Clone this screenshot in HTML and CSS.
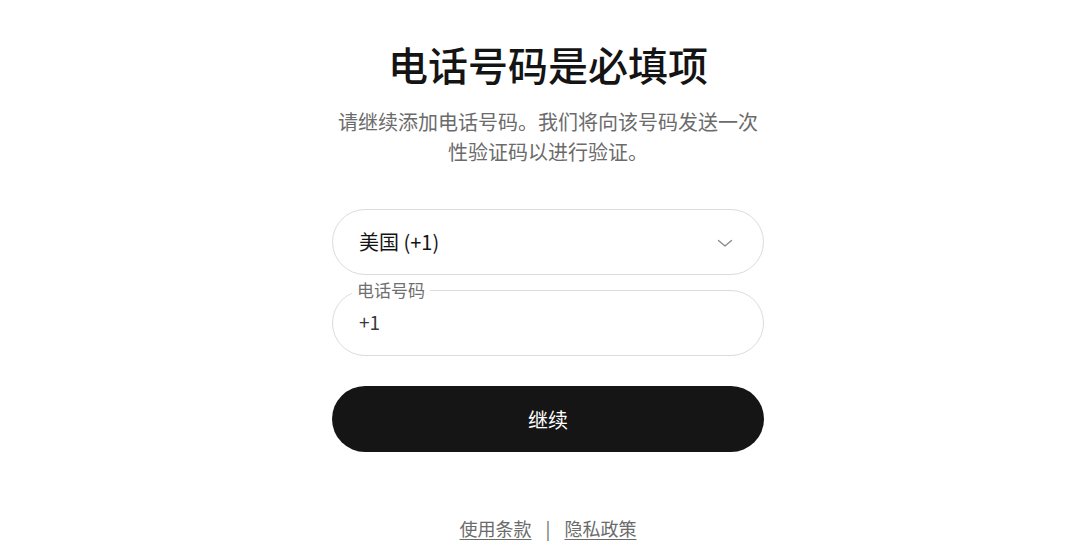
FILE: index.html
```html
<!DOCTYPE html>
<html lang="zh-CN">
<head>
<meta charset="utf-8">
<title>电话号码是必填项</title>
<link rel="stylesheet" href="styles.css">
</head>
<body>
<main class="page">
  <h1 class="title">电话号码是必填项</h1>
  <p class="subtitle">请继续添加电话号码。我们将向该号码发送一次性验证码以进行验证。</p>
  <form class="form">
    <div class="select">
      <span class="select-value">美国 (+1)</span>
      <svg class="chevron" width="16" height="9" viewBox="0 0 16 9"><path d="M1.5 1.5 L8 7 L14.5 1.5" fill="none" stroke="#8a8a8a" stroke-width="1.3" stroke-linecap="round" stroke-linejoin="round"/></svg>
    </div>
    <div class="field">
      <span class="field-label">电话号码</span>
      <span class="field-value">+1</span>
    </div>
    <button type="button" class="btn">继续</button>
  </form>
  <footer class="footer">
    <a class="link" href="#">使用条款</a>
    <span class="sep">|</span>
    <a class="link" href="#">隐私政策</a>
  </footer>
</main>
</body>
</html>
```
FILE: styles.css
```css
html, body {
  margin: 0;
  padding: 0;
  background: #ffffff;
}
body {
  font-family: "Noto Sans CJK SC", "Noto Sans", sans-serif;
  color: #141414;
  padding-left: 16px;
}
.page {
  width: 432px;
  margin: 0 auto;
  display: flex;
  flex-direction: column;
  align-items: stretch;
  padding-top: 40px;
}
.title {
  margin: 0;
  font-size: 40px;
  line-height: 48px;
  font-weight: 500;
  text-align: center;
  color: #141414;
  white-space: nowrap;
}
.subtitle {
  margin: 19px 0 0;
  font-size: 20px;
  line-height: 30px;
  color: #6b6b6b;
  text-align: center;
}
.form {
  display: flex;
  flex-direction: column;
  margin-top: 42px;
}
.select {
  height: 64px;
  border: 1px solid #dcdcdc;
  border-radius: 33px;
  display: flex;
  align-items: center;
  justify-content: space-between;
  padding: 0 30px 0 26px;
}
.select-value {
  font-size: 20px;
  color: #141414;
  margin-top: -2px;
}
.chevron {
  display: block;
  margin-top: 2px;
}
.field {
  position: relative;
  margin-top: 15px;
  height: 64px;
  border: 1px solid #dcdcdc;
  border-radius: 33px;
  display: flex;
  align-items: center;
  padding: 0 26px;
}
.field-label {
  position: absolute;
  top: -12px;
  left: 19px;
  padding: 0 5px;
  background: #ffffff;
  font-size: 17px;
  line-height: 22px;
  color: #707070;
}
.field-value {
  font-size: 19px;
  color: #3a3a3a;
  margin-top: -4px;
}
.btn {
  margin-top: 30px;
  height: 66px;
  border: none;
  border-radius: 33px;
  background: #151515;
  color: #ffffff;
  font-family: inherit;
  font-size: 20px;
  cursor: pointer;
}
.footer {
  margin-top: 63px;
  display: flex;
  justify-content: center;
  align-items: center;
  gap: 14px;
  font-size: 18px;
  line-height: 26px;
  color: #6b6b6b;
}
.link {
  color: #6b6b6b;
  text-decoration: underline;
  text-underline-offset: 3px;
}
.sep {
  color: #6b6b6b;
}
```
